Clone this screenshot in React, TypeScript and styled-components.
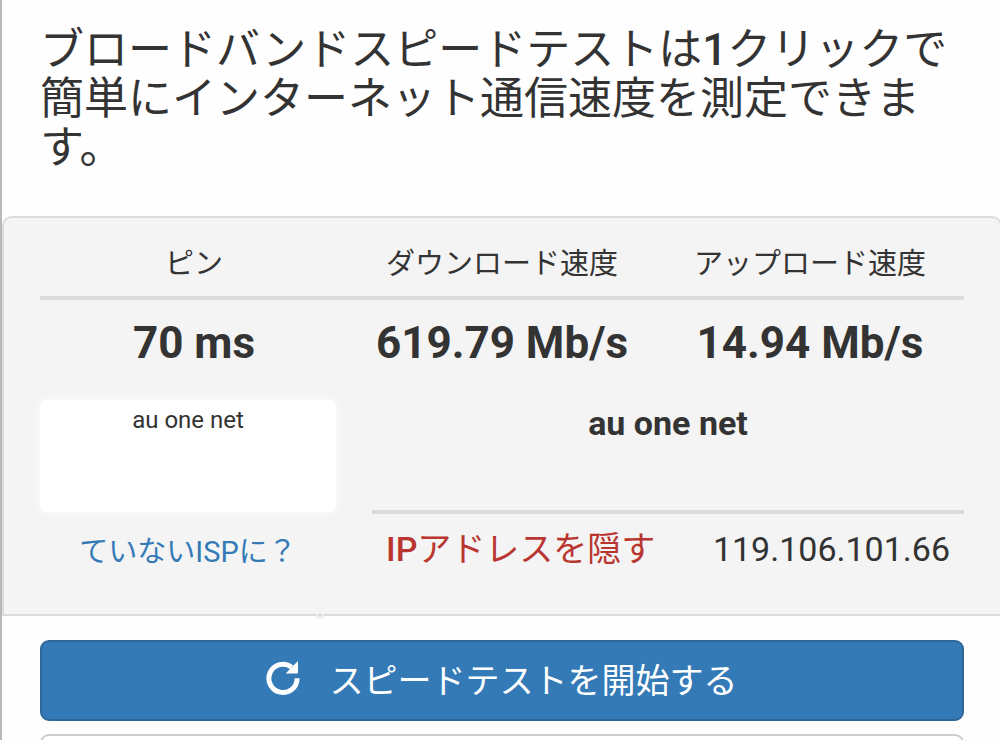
import React from "react";
import styled, { createGlobalStyle } from "styled-components";

const GlobalStyle = createGlobalStyle`
  * { box-sizing: border-box; }
  body {
    margin: 0;
    background: #fefefe;
    color: #333;
    font-family: Roboto, "Noto Sans CJK JP", sans-serif;
  }
`;

const Page = styled.main`
  height: 100vh;
  overflow: hidden;
  border-left: 2px solid #b8b8b8;
`;

const Intro = styled.header`
  padding: 26px 36px 43px 38px;
`;

const Title = styled.h1`
  margin: 0;
  font-size: 44px;
  line-height: 49px;
  font-weight: 400;
`;

const Latin = styled.span`
  font-weight: 500;
`;

const Panel = styled.section`
  position: relative;
  margin-right: -2px;
  padding: 20px 36px 40px;
  background: #f4f4f4;
  border: 2px solid #dcdcdc;
  border-radius: 10px 10px 0 0;
`;

const PanelMark = styled.span`
  position: absolute;
  top: 100%;
  left: 312px;
  width: 8px;
  height: 5px;
  border: 2px solid #ececec;
  border-top: 0;
  border-radius: 0 0 4px 4px;
`;

const Results = styled.table`
  width: 100%;
  table-layout: fixed;
  border-collapse: collapse;
  text-align: center;
`;

const Label = styled.th`
  height: 60px;
  padding: 4px 0 10px;
  border-bottom: 4px solid #dcdcdc;
  font-size: 29px;
  line-height: 44px;
  font-weight: 400;
`;

const Value = styled.td`
  padding: 17px 0 0;
  font-size: 44px;
  line-height: 52px;
  font-weight: 700;
`;

const Details = styled.div`
  display: grid;
  grid-template-columns: 1fr 2fr;
  column-gap: 36px;
  padding-top: 31px;
`;

const Logo = styled.div`
  height: 112px;
  padding-top: 6px;
  background: #fff;
  border-radius: 8px;
  box-shadow: 0 0 8px #fcfcfc;
  font-size: 24px;
  line-height: 28px;
  text-align: center;
`;

const Provider = styled.div`
  height: 114px;
  padding-top: 3px;
  border-bottom: 4px solid #dcdcdc;
  font-size: 34px;
  line-height: 40px;
  font-weight: 700;
  text-align: center;
`;

const ProviderLink = styled.a`
  padding-top: 16px;
  color: #337ab7;
  font-size: 29px;
  line-height: 44px;
  text-align: center;
  text-decoration: none;
`;

const AddressRow = styled.div`
  display: flex;
  justify-content: space-between;
  padding: 13px 14px 0;
  font-size: 34px;
  line-height: 44px;
`;

const HideLink = styled.a`
  color: #b93630;
  text-decoration: none;
`;

const Actions = styled.div`
  display: flex;
  flex-direction: column;
  gap: 13px;
  padding: 24px 36px 0 38px;
`;

const Button = styled.button<{ $primary?: boolean }>`
  display: flex;
  flex: none;
  align-items: center;
  justify-content: center;
  gap: 29px;
  height: 81px;
  padding: 0 2px 0 0;
  border: 2px solid ${(p) => (p.$primary ? "#2e6898" : "#ccc")};
  border-radius: 9px;
  background: ${(p) => (p.$primary ? "#337ab7" : "#fff")};
  color: ${(p) => (p.$primary ? "#fff" : "#333")};
  font-family: inherit;
  font-size: 34px;
  line-height: 44px;
`;

const Glyph = styled.svg`
  margin-bottom: 6px;
`;

const RepeatIcon = () => (
  <Glyph width="36" height="36" viewBox="0 0 36 36" aria-hidden="true">
    <path
      d="M32.1 18.3A14.1 14.1 0 1 1 26.6 7.2"
      fill="none"
      stroke="#fff"
      strokeWidth="5"
    />
    <path d="M33 1V12.6Q33 13.4 32.2 13.4H20.6Z" fill="#fff" />
  </Glyph>
);

const results = [
  { label: "ピン", value: "70 ms" },
  { label: "ダウンロード速度", value: "619.79 Mb/s" },
  { label: "アップロード速度", value: "14.94 Mb/s" },
];

export default function App() {
  return (
    <Page lang="ja">
      <GlobalStyle />
      <Intro>
        <Title>
          ブロードバンドスピードテストは<Latin>1</Latin>クリックで簡単にインターネット通信速度を測定できます。
        </Title>
      </Intro>
      <Panel>
        <Results>
          <thead>
            <tr>
              {results.map((r) => (
                <Label key={r.label} scope="col">{r.label}</Label>
              ))}
            </tr>
          </thead>
          <tbody>
            <tr>
              {results.map((r) => (
                <Value key={r.label}>{r.value}</Value>
              ))}
            </tr>
          </tbody>
        </Results>
        <Details>
          <Logo>au one net</Logo>
          <Provider>au one net</Provider>
          <ProviderLink href="#isp">ていないISPに？</ProviderLink>
          <AddressRow>
            <HideLink href="#hide-ip"><Latin>IP</Latin>アドレスを隠す</HideLink>
            <span>119.106.101.66</span>
          </AddressRow>
        </Details>
        <PanelMark />
      </Panel>
      <Actions>
        <Button type="button" $primary>
          <RepeatIcon />
          スピードテストを開始する
        </Button>
        <Button type="button" />
      </Actions>
    </Page>
  );
}
